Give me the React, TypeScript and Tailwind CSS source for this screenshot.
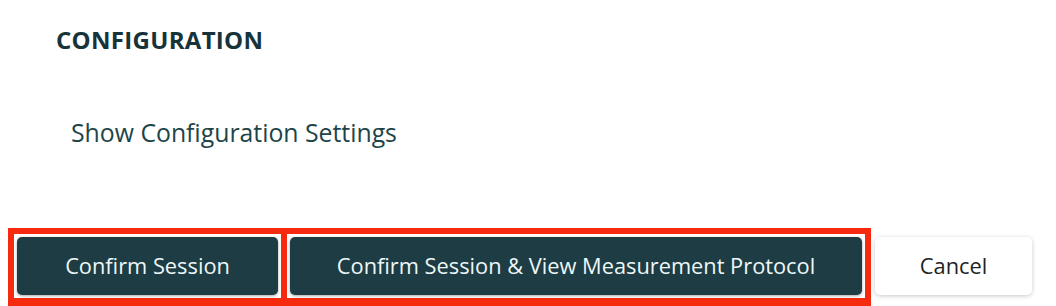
export default function App() {
  return (
    <div className="w-[1056px] h-[306px] bg-white overflow-hidden font-['Open_Sans',sans-serif]">
      {/* Section header */}
      <div className="pl-[56px] pt-[24px]">
        <h2 className="text-[24px] leading-[32px] font-bold text-[#17333a] tracking-[0.3px]">
          CONFIGURATION
        </h2>
      </div>

      {/* Settings toggle */}
      <div className="pl-[71px] pt-[60px]">
        <button className="text-[24.8px] leading-[32px] text-[#1d4548]">
          Show Configuration Settings
        </button>
      </div>

      {/* Actions (red boxes are highlight annotations) */}
      <div className="flex items-center pl-[8px] pt-[80px]">
        <div className="border-[6px] border-b-[8px] border-[#f52a0e] p-[3px]">
          <button className="block w-[261px] h-[58px] rounded-[5px] bg-[#1d3c44] text-[21.8px] text-[#eef7f7] shadow-[0_1px_3px_rgba(0,0,0,0.35)]">
            Confirm Session
          </button>
        </div>
        <div className="-ml-[6px] border-[6px] border-b-[8px] border-[#f52a0e] p-[3px]">
          <button className="block w-[572px] h-[58px] rounded-[5px] bg-[#1d3c44] text-[21.8px] text-[#eef7f7] shadow-[0_1px_3px_rgba(0,0,0,0.35)]">
            Confirm Session &amp; View Measurement Protocol
          </button>
        </div>
        <button className="ml-[4px] -mt-[2px] w-[157px] h-[58px] rounded-[5px] bg-white text-[21.8px] text-[#222222] shadow-[0_1px_4px_rgba(0,0,0,0.22)]">
          Cancel
        </button>
      </div>
    </div>
  );
}
